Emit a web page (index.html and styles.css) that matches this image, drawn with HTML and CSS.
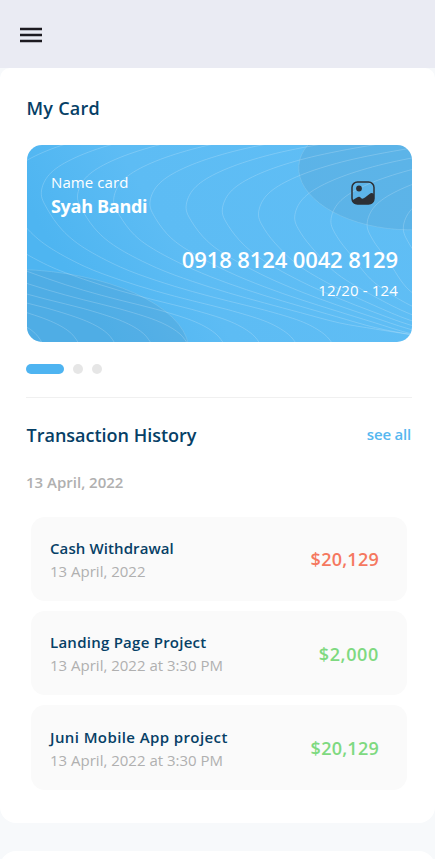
FILE: index.html
```html
<!DOCTYPE html>
<html lang="en">
<head>
<meta charset="utf-8">
<title>My Card</title>
<link rel="stylesheet" href="styles.css">
</head>
<body>
<header class="topbar">
  <svg class="menu" viewBox="0 0 22 16"><path d="M0 2h22M0 8h22M0 14h22"/></svg>
</header>
<main class="panel">
  <h1 class="title title-card">My Card</h1>
  <section class="card">
    <svg class="pattern" viewBox="0 0 385 197">
      <defs>
        <linearGradient id="sky" x1="0" y1="0.3" x2="1" y2="0">
          <stop offset="0" stop-color="#4eb5f1"/><stop offset="0.3" stop-color="#5dbcf4"/><stop offset="1" stop-color="#60bef5"/>
        </linearGradient>
      </defs>
      <rect width="385" height="197" fill="url(#sky)"/>
      <g class="blob">
        <ellipse cx="374" cy="28" rx="102.500" ry="56.500" transform="rotate(4 374 28)"/>
        <ellipse cx="4" cy="196" rx="158" ry="71" transform="rotate(4 4 196)"/>
      </g>
      <g class="contours" id="contours"></g>
    </svg>
    <div class="card-body">
      <div class="card-head">
        <div>
          <div class="card-label">Name card</div>
          <div class="card-name">Syah Bandi</div>
        </div>
        <svg class="picture" viewBox="0 0 24 24">
          <rect x="1" y="1" width="22" height="22" rx="5.500" fill="none" stroke="#2c3036" stroke-width="1.500"/>
          <circle cx="8" cy="7.500" r="2.900" fill="#2c3036"/>
          <path fill="#2c3036" d="M1 19.500 6 16.500Q8.500 15 10 17Q11.500 18.500 14 16.500L18.500 13Q21 11 23 13.500V18Q23 23 17.500 23H6.500Q2 23 1 19.500Z"/>
        </svg>
      </div>
      <div class="card-number">0918 8124 0042 8129</div>
      <div class="card-expiry">12/20 - 124</div>
    </div>
  </section>
  <div class="dots"><i class="dot dot-on"></i><i class="dot"></i><i class="dot"></i></div>
  <div class="history-head">
    <h2 class="title">Transaction History</h2>
    <a class="see-all">see all</a>
  </div>
  <div class="day">13 April, 2022</div>
  <ul class="list">
    <li class="item">
      <div><div class="name name-cash">Cash Withdrawal</div><div class="date">13 April, 2022</div></div>
      <div class="amount out">$20,129</div>
    </li>
    <li class="item">
      <div><div class="name name-landing">Landing Page Project</div><div class="date">13 April, 2022 at 3:30 PM</div></div>
      <div class="amount amount-short">$2,000</div>
    </li>
    <li class="item item-last">
      <div><div class="name name-juni">Juni Mobile App project</div><div class="date">13 April, 2022 at 3:30 PM</div></div>
      <div class="amount amount-last">$20,129</div>
    </li>
  </ul>
</main>
<section class="next-panel"></section>
<script src="contours.js"></script>
</body>
</html>
```
FILE: styles.css
```css
* { box-sizing: border-box; margin: 0; padding: 0; }
html, body { height: 859px; overflow: hidden; }
body { background: #f7f9fb; font-family: "Open Sans", "Noto Sans", sans-serif; color: #064066; }
svg { display: block; }
.topbar { height: 68px; background: #eaebf3; padding: 27px 20px; }
.menu { width: 22px; height: 16px; fill: none; stroke: #1d1a20; stroke-width: 2.3; }
.panel { height: 755px; background: #fff; border-radius: 10px 10px 16px 16px; padding: 26px 23px 0 27px; }
.title { font-size: 18px; line-height: 28px; font-weight: 600; white-space: nowrap; margin-left: -0.5px; }
.title-card { letter-spacing: 0.25px; }
.card { display: grid; width: 385px; height: 197px; margin-top: 23px; border-radius: 15px; overflow: hidden; color: #fff; }
.pattern, .card-body { grid-area: 1 / 1; }
.pattern { width: 385px; height: 197px; }
.blob { fill: #5395bd; fill-opacity: .23; stroke: #9fd0ee; stroke-opacity: .4; stroke-width: .8; }
.contours { fill: none; stroke: #fff; stroke-opacity: .24; stroke-width: .8; }
.card-body { z-index: 1; padding: 26px 14px 0 24px; }
.card-head { display: flex; justify-content: space-between; height: 73px; padding-right: 23px; }
.card-label { font-size: 15px; line-height: 23px; letter-spacing: .1px; }
.card-name { font-size: 18px; line-height: 24px; font-weight: 700; letter-spacing: -.3px; }
.picture { width: 24px; height: 24px; margin-top: 10px; }
.card-number { text-align: right; font-size: 22px; line-height: 30px; font-weight: 600; letter-spacing: -.12px; }
.card-expiry { text-align: right; font-size: 15px; line-height: 30px; margin-top: 1px; letter-spacing: .15px; }
.dots { display: flex; align-items: center; gap: 9px; width: 386px; height: 56px; margin-left: -1px; padding-bottom: 1px; border-bottom: 1px solid #f0f0f0; }
.dot { width: 10px; height: 10px; border-radius: 5px; background: #e6e6e6; }
.dot-on { width: 38px; background: #4eb4f1; }
.history-head { display: flex; justify-content: space-between; align-items: center; width: 385px; height: 30px; margin-top: 22px; }
.see-all { font-size: 15px; font-weight: 600; color: #55b7f0; letter-spacing: -.2px; padding: 0 1px 2px 0; }
.day { font-size: 15px; line-height: 24px; font-weight: 600; color: #b0b0b0; margin: 20px 0 0 -1px; }
.list { list-style: none; display: grid; gap: 9.8px; margin: 22.500px 0 0 4px; width: 376px; }
.item { display: flex; justify-content: space-between; align-items: center; height: 84.500px; padding: 2px 28px 0 19px; border-radius: 14px; background: #fafafa; white-space: nowrap; }
.item-last { padding-top: 4px; }
.name { font-size: 15px; line-height: 23px; font-weight: 600; }
.name-cash { letter-spacing: .1px; }
.name-landing { letter-spacing: .25px; }
.name-juni { letter-spacing: .4px; }
.date { font-size: 15px; line-height: 23px; color: #b0b0b0; }
.amount { font-size: 18px; font-weight: 600; color: #7ed980; letter-spacing: .25px; }
.amount-short { letter-spacing: .65px; }
.amount-last { padding-bottom: 2px; }
.out { color: #f5785f; padding-bottom: 2px; }
.next-panel { height: 40px; margin-top: 28px; background: #fff; border-radius: 16px 16px 0 0; }
```
FILE: contours.js
```js
// Contour lines of the bank card, each one a step right of the last.
const group = document.getElementById("contours");
for (let k = -9; k <= 10; k++) {
  const x = 14.3 + 36.2 * k, y = 47.5 + 3.5 * k;
  const upper = [[300, -88], [200, -73], [117, -59], [67, -47], [30, -33], [8, -18], [0, 0]]
    .map(p => [x + p[0], y + p[1]]);
  const lower = [[6, 64, 3.3], [21, 85, 2.6], [43, 103, 1.5], [79, 122, 0.8], [115, 135.5, 0.6],
    [151, 146.5, 0.4], [187, 156, 0.3], [223, 165, 0.3]];
  if (k > 0) lower.push([262, 174.5, 0.3], [298, 180, 0.3], [334, 185, 0.3]);
  else lower.push([259, 176, 0.2], [280, 187, 0.2], [290, 197, 0], [293, 206, 0]);
  // The lines draw together towards the card's right edge.
  const shift = (dx, s) => {
    if (k <= 0) return s * k;
    const t = Math.min(1, Math.max(0, (x + dx - 150) / 235));
    return (s + ((dx < 30 ? 3.5 : 4.8) - s) * t) * k;
  };
  const pts = upper.concat(lower.map(p => [x + p[0], p[1] + shift(p[0], p[2])]));
  let d = `M${pts[0]}`;
  for (let i = 0; i < pts.length - 1; i++) {
    const a = pts[i - 1] || pts[i], b = pts[i], c = pts[i + 1], e = pts[i + 2] || c;
    d += `C${b[0] + (c[0] - a[0]) / 6} ${b[1] + (c[1] - a[1]) / 6} ${c[0] - (e[0] - b[0]) / 6} ${c[1] - (e[1] - b[1]) / 6} ${c[0]} ${c[1]}`;
  }
  const path = document.createElementNS("http://www.w3.org/2000/svg", "path");
  path.setAttribute("d", d);
  group.appendChild(path);
}
```
